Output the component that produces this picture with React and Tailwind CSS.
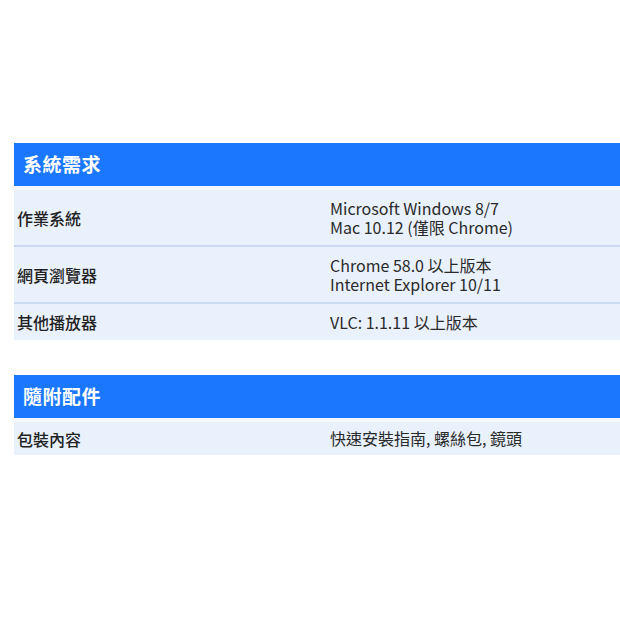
const sections = [
  {
    title: "系統需求",
    rows: [
      { label: "作業系統", value: ["Microsoft Windows 8/7", "Mac 10.12 (僅限 Chrome)"], h: "h-[57px]" },
      { label: "網頁瀏覽器", value: ["Chrome 58.0 以上版本", "Internet Explorer 10/11"], h: "h-[57px]" },
      { label: "其他播放器", value: ["VLC: 1.1.11 以上版本"], h: "h-[36px]" },
    ],
  },
  {
    title: "隨附配件",
    rows: [{ label: "包裝內容", value: ["快速安裝指南, 螺絲包, 鏡頭"], h: "h-[33px]" }],
  },
];

const Section = ({ title, rows }) => (
  <div className="flex flex-col">
    <div className="h-[43px] bg-[#1a77fe] flex items-center pl-[9px]">
      <h2 className="text-white text-[19px] font-bold tracking-[0.5px]">{title}</h2>
    </div>
    <div className="h-[4px] bg-[#f4f8fe]" />
    {rows.map((row, i) => (
      <div
        key={row.label}
        className={`flex items-center bg-[#e9f1fc] ${row.h} ${
          i < rows.length - 1 ? "border-b-2 border-[#c9daf2]" : ""
        }`}
      >
        <div className="w-[316px] pl-[3px] text-[16px] font-medium text-[#222]">{row.label}</div>
        <div className="flex flex-col text-[16px] leading-[19px] text-[#2a2a2a]">
          {row.value.map((line) => (
            <span key={line}>{line}</span>
          ))}
        </div>
      </div>
    ))}
  </div>
);

export default function App() {
  return (
    <div
      className="w-[620px] h-[620px] bg-white pt-[143px] pl-[14px] flex flex-col gap-[35px]"
      style={{ fontFamily: '"Noto Sans CJK TC", "Noto Sans", sans-serif' }}
    >
      {sections.map((s) => (
        <Section key={s.title} {...s} />
      ))}
    </div>
  );
}
